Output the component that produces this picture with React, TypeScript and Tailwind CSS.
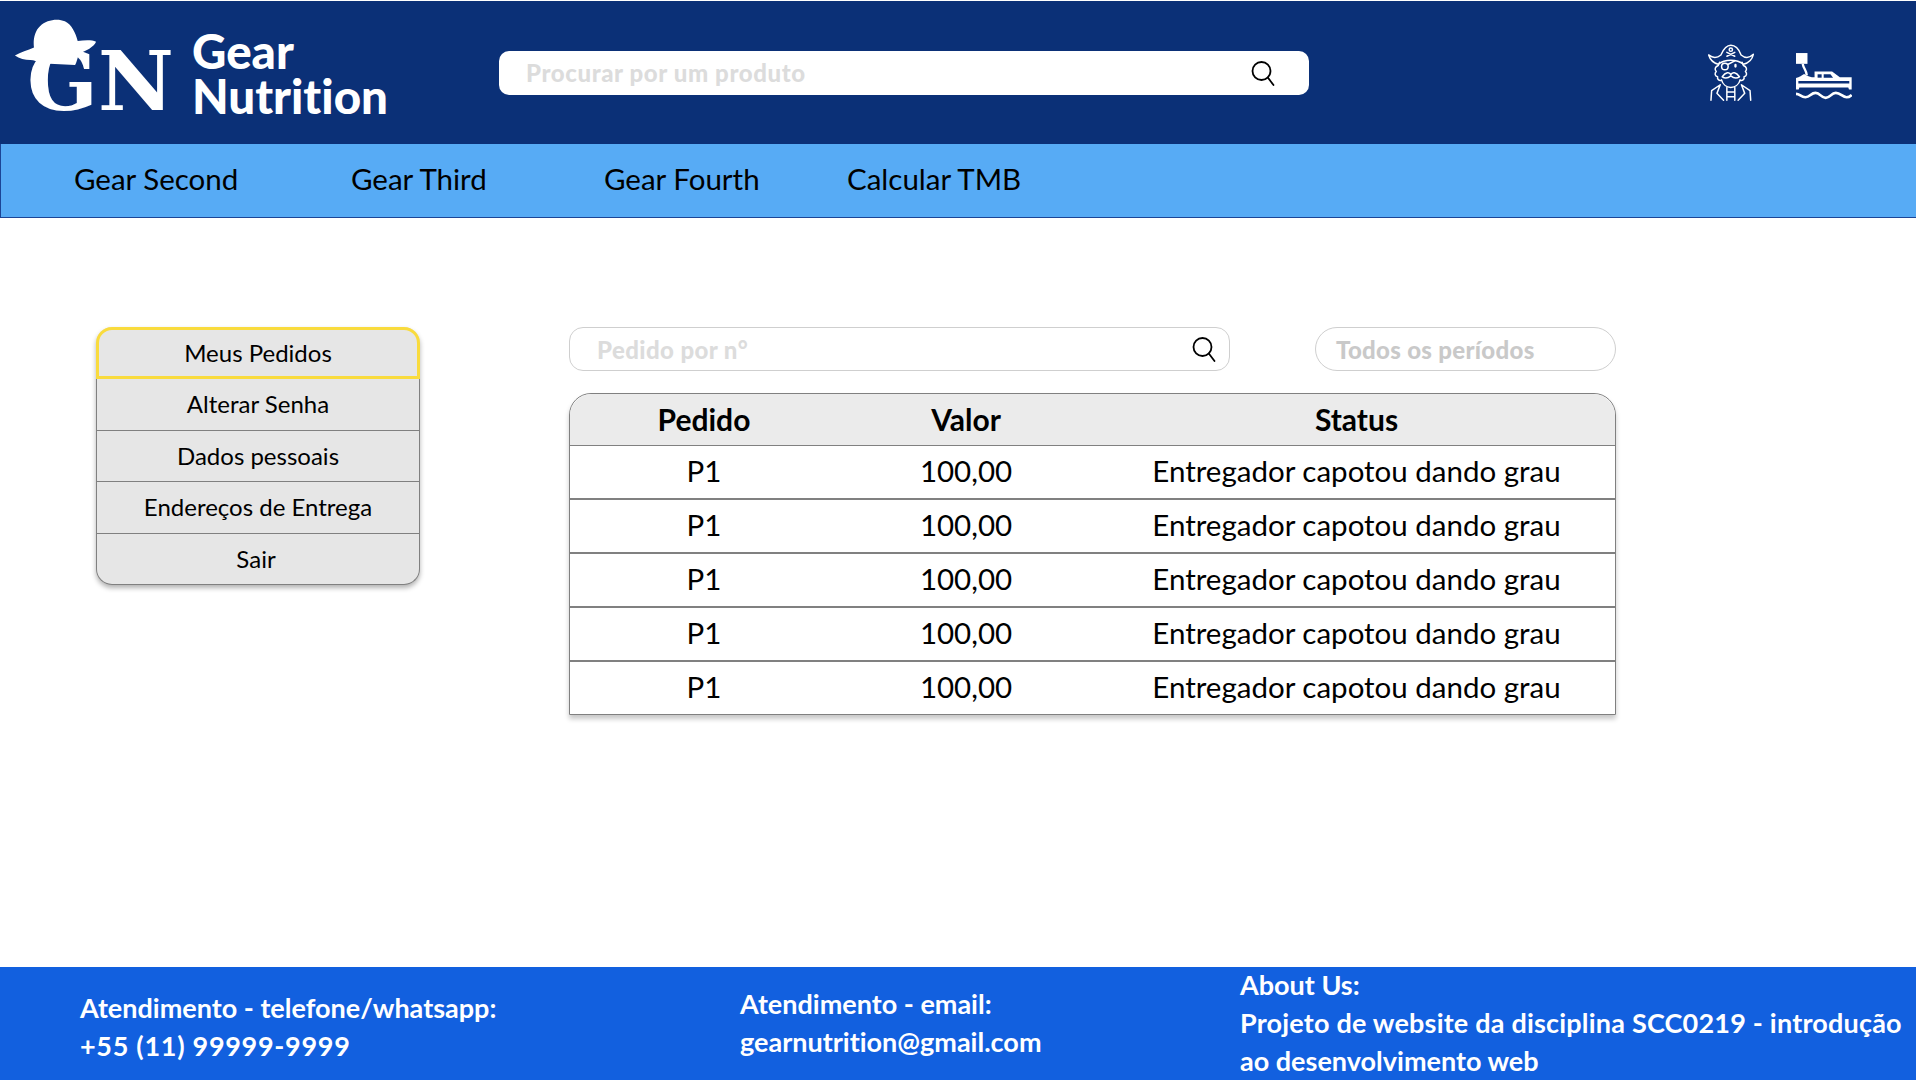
const rows = [0, 1, 2, 3, 4];
const menu = ["Alterar Senha", "Dados pessoais", "Endereços de Entrega", "Sair"];

function Lens() {
  return (
    <svg width="24" height="26" viewBox="0 0 24 26" fill="none" stroke="#000" strokeWidth="1.8" strokeLinecap="round">
      <circle cx="10.5" cy="11" r="9" />
      <path d="M16.8 17.5 L22.5 25" />
    </svg>
  );
}

function Hat() {
  return (
    <svg className="absolute left-[14px] top-[18px]" width="84" height="46" viewBox="45 55 250 140">
      <path
        fill="#fff"
        d="M45 166 C62 156 84 150 103 142 C100 120 104 92 122 76 C140 58 175 52 197 62 C218 72 230 98 236 122 C255 120 278 118 292 124 C285 140 262 152 240 160 C235 176 232 190 228 195 L120 190 C112 184 104 180 92 180 C76 180 58 176 45 166 Z"
      />
    </svg>
  );
}

function Pirate() {
  return (
    <svg width="48" height="58" viewBox="50 27 145 175" fill="none" stroke="#fff" strokeWidth="4.5" strokeLinecap="round" strokeLinejoin="round">
      <path d="M55 60 C68 70 80 70 92 60 C100 42 110 31 122 31 C134 31 146 42 153 60 C165 70 178 70 190 58 C186 76 172 85 160 88 C140 72 104 72 84 88 C72 85 60 76 55 60 Z" />
      <circle cx="122" cy="44" r="5" />
      <path d="M110 52 L134 64 M134 52 L110 64" />
      <circle cx="104" cy="95" r="10" />
      <path d="M88 82 L84 92 C74 96 72 104 78 110 C72 116 74 124 82 126 C80 134 88 140 94 136" />
      <path d="M156 82 L160 92 C170 96 172 104 166 110 C172 116 170 124 162 126 C164 134 156 140 150 136" />
      <path d="M114 88 L134 78" />
      <path d="M136 90 L136 95" strokeWidth="7" />
      <path d="M96 126 C106 112 118 110 122 120 C126 110 138 112 148 126 C138 132 128 128 122 123 C116 128 106 132 96 126 Z" />
      <path d="M94 136 C98 150 110 158 122 158 C134 158 146 150 150 136" />
      <path d="M62 197 L64 168 L90 150 L80 176 L100 197 M182 197 L180 168 L154 150 L164 176 L144 197" />
      <path d="M110 158 V197 M134 158 V197 M110 172 H134 M110 186 H134" />
    </svg>
  );
}

function Boat() {
  return (
    <svg width="56" height="48" viewBox="48 44 166 142" fill="none">
      <rect x="48" y="44" width="34" height="32" fill="#fff" />
      <path d="M68 76 C70 90 78 92 80 110" stroke="#fff" strokeWidth="7" />
      <path d="M48 118 C58 116 66 110 72 106 C82 112 92 116 103 116 V99 H155 L178 116 H213 V127 H48 Z" fill="#fff" />
      <rect x="112" y="107" width="12" height="10" fill="#0b3077" />
      <path d="M130 107 H150 L158 117 H130 Z" fill="#0b3077" />
      <path d="M48 127 H55 V134 H206 V127 H213 V152 H205 L203 146 H58 L56 152 H48 Z" fill="#fff" />
      <path d="M48 165 C60 165 62 175 76 175 C90 175 92 162 106 162 C120 162 122 177 136 177 C150 177 152 162 166 162 C180 162 186 175 198 175 C204 175 208 173 213 168" stroke="#fff" strokeWidth="8" />
    </svg>
  );
}

export default function App() {
  return (
    <div className="flex h-[1080px] w-[1916px] flex-col overflow-hidden bg-white font-['Lato','Liberation_Sans',sans-serif] text-black [font-variant-ligatures:none]">
      <header className="flex h-[144px] items-center border-t border-white bg-[#0b3077]">
        <div className="relative flex h-full w-[192px] shrink-0 items-start pl-[27px] pt-[40px]">
          <Hat />
          <span className="relative font-['DejaVu_Serif',serif] text-[83px] font-bold leading-[80px] text-white">GN</span>
        </div>
        <div className="w-[307px] shrink-0 text-[47.5px] font-black leading-[45px] text-white">
          Gear
          <br />
          Nutrition
        </div>
        <div className="flex h-[44px] w-[810px] items-center justify-between rounded-[10px] bg-white pl-[27px] pr-[34px]">
          <span className="pt-[1px] text-[24px] font-black tracking-[0.6px] text-[#dcdcdc]">Procurar por um produto</span>
          <Lens />
        </div>
        <div className="ml-[398px] flex items-center">
          <div className="mr-[41px]">
            <Pirate />
          </div>
          <div className="mt-[9px]">
            <Boat />
          </div>
        </div>
      </header>

      <nav className="flex h-[74px] items-center border-b border-l border-[#1c4596] bg-[#57abf5] pb-[3px] pl-[73px] text-[29.5px]">
        <span className="w-[277px]">Gear Second</span>
        <span className="w-[253px]">Gear Third</span>
        <span className="w-[243px]">Gear Fourth</span>
        <span>Calcular TMB</span>
      </nav>

      <main className="flex flex-1 items-start pl-[96px] pt-[109px]">
        <aside className="w-[324px] shrink-0 rounded-[16px] bg-[#e6e6e6] text-center text-[24px] shadow-[0_3px_5px_rgba(0,0,0,0.3)]">
          <div className="flex h-[52px] items-center justify-center rounded-t-[16px] border-[3px] border-[#f9db3d]">Meus Pedidos</div>
          {menu.map((m, i) => (
            <div
              key={m}
              className={
                i === 3
                  ? "flex h-[51.5px] items-center justify-center rounded-b-[16px] border-x border-b border-[#808080] pr-[4px]"
                  : "flex h-[51.5px] items-center justify-center border-x border-b border-[#808080]"
              }
            >
              {m}
            </div>
          ))}
        </aside>

        <section className="ml-[149px] w-[1047px]">
          <div className="flex h-[44px] items-stretch justify-between">
            <div className="flex w-[661px] items-center justify-between rounded-[14px] border border-[#cfcfcf] pl-[27px] pr-[13px]">
              <span className="pt-[1px] text-[24px] font-black tracking-[0.4px] text-[#dcdcdc]">Pedido por n°</span>
              <Lens />
            </div>
            <div className="flex w-[301px] items-center rounded-[22px] border border-[#cfcfcf] pl-[20px]">
              <span className="pt-[1px] text-[24px] font-black tracking-[0.3px] text-[#c9c9c9]">Todos os períodos</span>
            </div>
          </div>

          <div className="mt-[22px] rounded-t-[22px] border border-[#808080] shadow-[0_4px_5px_rgba(0,0,0,0.22)]">
            <div className="grid h-[52px] grid-cols-[268px_256px_1fr] items-center rounded-t-[22px] border-b border-[#808080] bg-[#ebebeb] text-center text-[30px] font-bold">
              <span>Pedido</span>
              <span>Valor</span>
              <span className="pl-[4px]">Status</span>
            </div>
            {rows.map((r) => (
              <div
                key={r}
                className={
                  r === 4
                    ? "grid h-[52px] grid-cols-[268px_256px_1fr] items-center pb-[1px] text-center text-[29.5px]"
                    : "grid h-[54px] grid-cols-[268px_256px_1fr] items-center border-b-2 border-[#808080] pb-[1px] text-center text-[29.5px]"
                }
              >
                <span>P1</span>
                <span>100,00</span>
                <span className="pl-[4px]">Entregador capotou dando grau</span>
              </div>
            ))}
          </div>
        </section>
      </main>

      <footer className="flex h-[113px] items-center bg-[#1260df] pb-[2px] text-[27px] font-bold leading-[38px] text-white">
        <div className="ml-[80px] mt-[8px] w-[660px] shrink-0">
          Atendimento - telefone/whatsapp:
          <br />
          <span className="tracking-[0.7px]">+55 (11) 99999-9999</span>
        </div>
        <div className="w-[500px] shrink-0">
          Atendimento - email:
          <br />
          gearnutrition@gmail.com
        </div>
        <div className="whitespace-nowrap">
          About Us:
          <br />
          <span className="tracking-[0.2px]">Projeto de website da disciplina SCC0219 - introdução</span>
          <br />
          ao desenvolvimento web
        </div>
      </footer>
    </div>
  );
}
